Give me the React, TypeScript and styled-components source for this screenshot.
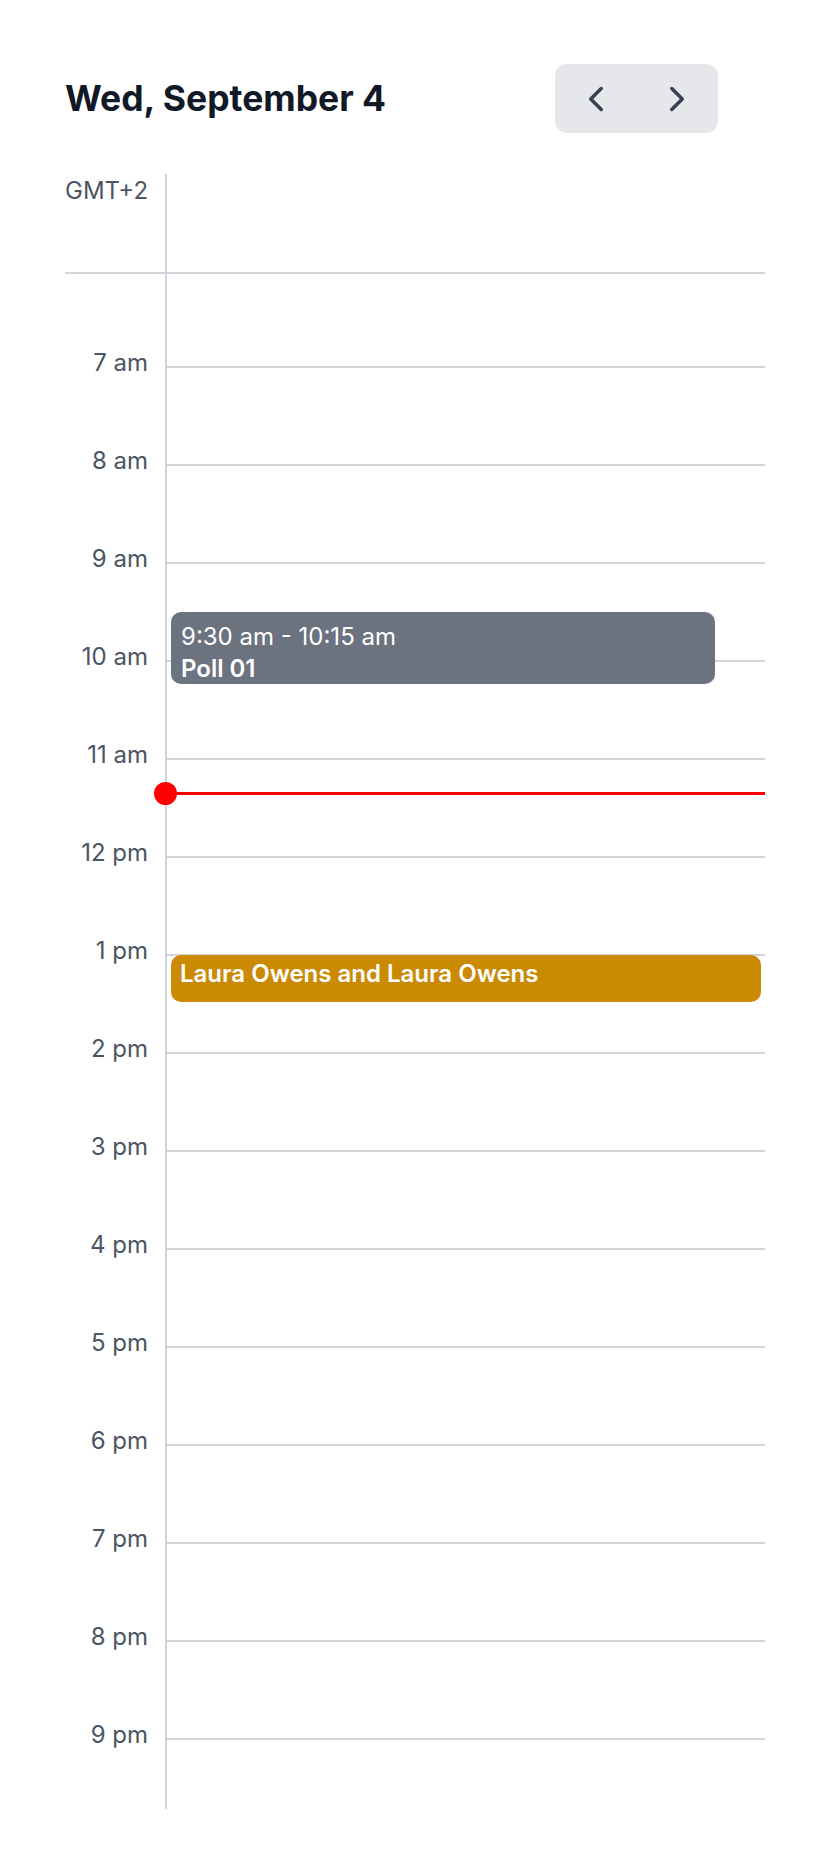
import styled, { createGlobalStyle } from 'styled-components';
import { ChevronLeft, ChevronRight } from 'lucide-react';

const HOUR = 98;
const FIRST_LINE = 92; // 7 am line, from the top of the hour body
const NOW = 11 + 22 / 60;

const toY = (t: number) => FIRST_LINE + (t - 7) * HOUR;

const hours = [6, 7, 8, 9, 10, 11, 12, 13, 14, 15, 16, 17, 18, 19, 20, 21];

const hourLabel = (h: number) => {
  if (h === 12) return '12 pm';
  return h < 12 ? `${h} am` : `${h - 12} pm`;
};

interface CalEvent {
  id: number;
  start: number;
  end: number;
  time?: string;
  title: string;
  color: string;
  inset: number;
  compact?: boolean;
}

const events: CalEvent[] = [
  { id: 1, start: 9.5, end: 10.25, time: '9:30 am - 10:15 am', title: 'Poll 01', color: '#6b7280', inset: 50 },
  { id: 2, start: 13, end: 13.5, title: 'Laura Owens and Laura Owens', color: '#ca8a04', inset: 4, compact: true },
];

const GlobalStyle = createGlobalStyle`
  html, body {
    margin: 0;
    padding: 0;
    background: #ffffff;
  }
  body {
    font-family: Inter, "Noto Sans", "Liberation Sans", sans-serif;
    -webkit-font-smoothing: antialiased;
  }
`;

const Page = styled.div`
  padding: 64px 64px 0 65px;
`;

const Header = styled.header`
  display: flex;
  align-items: center;
  justify-content: space-between;
  padding-right: 47px;
  margin-bottom: 41px;
`;

const Title = styled.h1`
  margin: 0;
  font-size: 35.5px;
  line-height: 48px;
  font-weight: 700;
  color: #111827;
`;

const NavGroup = styled.div`
  display: flex;
  background: #e5e7eb;
  border-radius: 12px;
  overflow: hidden;
`;

const NavButton = styled.button`
  width: 81.5px;
  height: 69px;
  border: none;
  background: transparent;
  padding: 0;
  display: flex;
  align-items: center;
  justify-content: center;
  color: #374151;
  cursor: pointer;
`;

const Row = styled.div<{ $height: number; $divider?: boolean }>`
  display: grid;
  grid-template-columns: 100px 1fr;
  box-sizing: border-box;
  height: ${(p) => p.$height}px;
  flex-shrink: 0;
  border-bottom: ${(p) => (p.$divider ? '2px solid #d1d5db' : 'none')};
`;

const LabelCell = styled.div`
  padding-right: 17px;
  text-align: right;
  color: #4b5563;
`;

const ZoneLabel = styled.div`
  font-size: 24px;
  line-height: 33px;
`;

const HourLabel = styled.div`
  margin-top: -15px;
  font-size: 24px;
  line-height: 24px;
`;

const DayCell = styled.div<{ $line?: boolean }>`
  border-left: 2px solid #d1d5db;
  border-top: ${(p) => (p.$line ? '2px solid #d1d5db' : 'none')};
`;

const Body = styled.div`
  position: relative;
  height: 1535px;
  overflow: hidden;
  display: flex;
  flex-direction: column;
`;

const Overlay = styled.div`
  position: absolute;
  top: 0;
  bottom: 0;
  left: 102px;
  right: 0;
`;

const EventCard = styled.div<{ $bg: string; $inset: number; $compact?: boolean }>`
  position: absolute;
  left: 4px;
  right: ${(p) => p.$inset}px;
  box-sizing: border-box;
  background: ${(p) => p.$bg};
  border-radius: 10px;
  padding: ${(p) => (p.$compact ? '1px 9px' : '7px 10px 0')};
  color: #ffffff;
  font-size: 24px;
  line-height: ${(p) => (p.$compact ? '36px' : '28.5px')};
  overflow: hidden;
`;

const EventTime = styled.div`
  font-weight: 400;
  line-height: 36px;
  white-space: nowrap;
`;

const EventTitle = styled.div`
  font-weight: 600;
  white-space: nowrap;
`;

const NowLine = styled.div`
  position: absolute;
  left: -2px;
  right: 0;
  height: 3px;
  background: #ff0000;
`;

const NowDot = styled.span`
  position: absolute;
  left: -11.5px;
  top: 50%;
  width: 23px;
  height: 23px;
  margin-top: -11.5px;
  border-radius: 50%;
  background: #ff0000;
`;

export default function App() {
  return (
    <Page>
      <GlobalStyle />
      <Header>
        <Title>Wed, September 4</Title>
        <NavGroup>
          <NavButton aria-label="Previous day">
            <ChevronLeft size={42} strokeWidth={2} />
          </NavButton>
          <NavButton aria-label="Next day">
            <ChevronRight size={42} strokeWidth={2} />
          </NavButton>
        </NavGroup>
      </Header>

      <Row $height={100} $divider>
        <LabelCell>
          <ZoneLabel>GMT+2</ZoneLabel>
        </LabelCell>
        <DayCell />
      </Row>

      <Body>
        {hours.map((h) => (
          <Row key={h} $height={h === 6 ? FIRST_LINE : HOUR}>
            <LabelCell>{h > 6 && <HourLabel>{hourLabel(h)}</HourLabel>}</LabelCell>
            <DayCell $line={h > 6} />
          </Row>
        ))}

        <Overlay>
          {events.map((ev) => (
            <EventCard
              key={ev.id}
              $bg={ev.color}
              $inset={ev.inset}
              $compact={ev.compact}
              style={{ top: toY(ev.start) + 1, height: (ev.end - ev.start) * HOUR - 2 }}
            >
              {ev.time && <EventTime>{ev.time}</EventTime>}
              <EventTitle>{ev.title}</EventTitle>
            </EventCard>
          ))}
          <NowLine style={{ top: toY(NOW) - 1.5 }}>
            <NowDot />
          </NowLine>
        </Overlay>
      </Body>
    </Page>
  );
}
